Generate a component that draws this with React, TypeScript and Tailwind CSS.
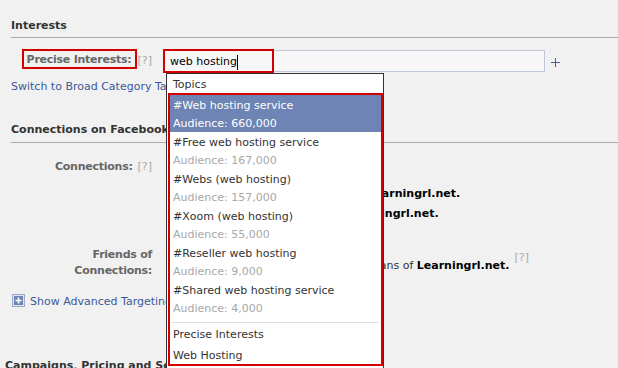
import React from 'react'

// ─── Data ─────────────────────────────────────────────────────────────────────

const TOPICS = [
  { name: '#Web hosting service', audience: '660,000' },
  { name: '#Free web hosting service', audience: '167,000' },
  { name: '#Webs (web hosting)', audience: '157,000' },
  { name: '#Xoom (web hosting)', audience: '55,000' },
  { name: '#Reseller web hosting', audience: '9,000' },
  { name: '#Shared web hosting service', audience: '4,000' },
]

function Help() {
  return <span className="text-[#aaa] leading-[14px]">[?]</span>
}

// ─── Suggestion dropdown ──────────────────────────────────────────────────────

function Suggestions() {
  return (
    <div className="absolute left-[166px] top-[73px] w-[218px] h-[300px] border border-[#333] bg-white">
      <div className="h-[19px] pt-[1px] pl-[6px] leading-[20px] text-[#333]">Topics</div>
      <div className="border-2 border-[#d40000] ml-px pb-px">
        {TOPICS.map((t, i) => (
          <div
            key={t.name}
            className={`h-[37px] pt-[2px] pl-[3px] leading-[18px] ${i === 0 ? 'bg-[#6d84b4] text-white' : 'text-[#333]'}`}
          >
            <div className="h-[18px]">{t.name}</div>
            <div className={`h-[17px] ${i === 0 ? 'text-white' : 'text-[#a8a8a8]'}`}>Audience: {t.audience}</div>
          </div>
        ))}
        <div className="mt-[5px] mx-[2px] border-t border-[#ddd]" />
        <div className="h-[20px] pt-[3px] pl-[3px] leading-[17px] text-[#333]">Precise Interests</div>
        <div className="h-[20px] pt-[4px] pl-[3px] leading-[17px] text-[#333]">Web Hosting</div>
      </div>
    </div>
  )
}

// ─── Page ─────────────────────────────────────────────────────────────────────

export default function App() {
  return (
    <div className="relative w-[618px] h-[368px] overflow-hidden bg-[#f1f1f1] text-[11px] text-[#333] font-['DejaVu_Sans',sans-serif]">
      {/* Interests */}
      <div className="ml-[11px] h-[38px] border-b border-[#aaa] pt-[19px] font-bold leading-[14px]">Interests</div>

      <div className="flex items-start mt-[11px]">
        <div className="w-[152px] flex justify-end items-start h-[20px]">
          <div className="w-[115px] h-[20px] border-2 border-[#d40000] pt-[2px] pl-[3px] font-bold text-[#666] tracking-[-0.25px] leading-[14px]">
            Precise Interests:
          </div>
          <div className="ml-[1px] pt-[4px]">
            <Help />
          </div>
        </div>
        <div className="relative ml-[11px] mt-px w-[382px] h-[22px] border border-[#bdc7d8] bg-[#f7f7f7] pl-[6px] pt-[2px] leading-[18px] text-black flex items-center">
          <span>web hosting</span>
          <span className="inline-block w-px h-[15px] bg-black" />
          <div className="absolute -left-px -top-[2px] w-[111px] h-[24px] border-2 border-[#d40000]" />
        </div>
        <svg width="9" height="9" viewBox="0 0 9 9" className="ml-[6px] mt-[9px]">
          <path d="M4.5 0v9M0 4.5h9" stroke="#4b5f8a" strokeWidth="1" />
        </svg>
      </div>

      <div className="ml-[11px] mt-[8px] leading-[14px] text-[#3b5998]">Switch to Broad Category Targeting</div>

      {/* Connections on Facebook */}
      <div className="ml-[11px] mt-[29px] h-[20px] border-b border-[#aaa] font-bold leading-[14px]">Connections on Facebook</div>

      <div className="flex items-start mt-[17px]">
        <div className="w-[152px] flex justify-end leading-[14px]">
          <span className="font-bold text-[#666] tracking-[-0.25px]">Connections:</span>
          <span className="ml-[5px]">
            <Help />
          </span>
        </div>
        <div className="ml-[36px] flex flex-col leading-[14px]">
          <span>Anyone</span>
          <span className="mt-[13px]">
            Only people who are not fans of <b className="text-black">Learningrl.net.</b>
          </span>
          <span className="mt-[6px]">
            Only people who are fans of <b className="text-black">Learningrl.net.</b>
          </span>
        </div>
      </div>

      <div className="flex items-start mt-[26px]">
        <div className="w-[152px] flex flex-col items-end leading-[16px] font-bold text-[#666] tracking-[-0.25px]">
          <span>Friends of</span>
          <span>Connections:</span>
        </div>
        <div className="ml-[53px] mt-[3px] flex items-start">
          <span className="mt-[9px] leading-[14px]">
            Only people whose friends are fans of <b className="text-black">Learningrl.net.</b>
          </span>
          <span className="ml-[5px]">
            <Help />
          </span>
        </div>
      </div>

      <div className="flex items-start ml-[12px] mt-[16px] leading-[14px]">
        <svg width="13" height="13" viewBox="0 0 13 13" className="-mt-px">
          <rect x="0.5" y="0.5" width="12" height="12" fill="#dfe4ee" stroke="#9aa8c6" />
          <rect x="2" y="2" width="9" height="9" fill="#6d84b4" />
          <path d="M6.5 3.5v6M3.5 6.5h6" stroke="#fff" strokeWidth="1.6" />
        </svg>
        <span className="ml-[5px] text-[#3b5998]">Show Advanced Targeting Options</span>
      </div>

      <div className="ml-[5px] mt-[50px] font-bold leading-[14px]">Campaigns, Pricing and Scheduling</div>

      <Suggestions />
    </div>
  )
}
